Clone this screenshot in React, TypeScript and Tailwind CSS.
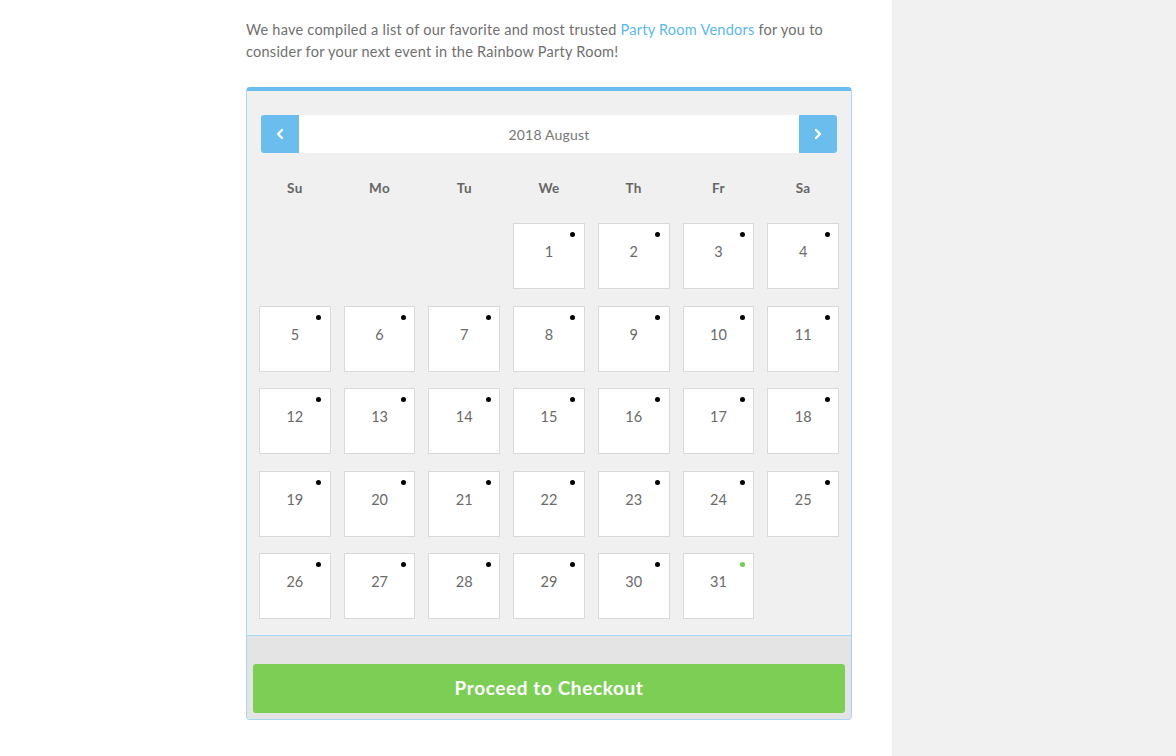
import { ChevronLeft, ChevronRight } from 'lucide-react';

const weekdays = ['Su', 'Mo', 'Tu', 'We', 'Th', 'Fr', 'Sa'];

// August 2018 starts on a Wednesday
const cells: (number | null)[] = [
  ...Array(3).fill(null),
  ...Array.from({ length: 31 }, (_, i) => i + 1),
];

export default function App() {
  return (
    <div className="flex min-h-[756px] w-[1176px] font-['Lato',sans-serif]">
      <main className="w-[892px] shrink-0 bg-white pl-[246px] pt-[19px]">
        <p className="w-[606px] text-[14.5px] leading-[22px] tracking-[0.25px] text-[#6f6f6f]">
          We have compiled a list of our favorite and most trusted{' '}
          <a href="#" className="text-[#5ab9ea]">Party Room Vendors</a> for you to consider for your next event in the
          Rainbow Party Room!
        </p>

        {/* Calendar */}
        <div className="mt-[24px] w-[606px] overflow-hidden rounded-[4px] border border-t-4 border-[#a5d6f2] border-t-[#6bbdee] bg-[#f0f0f0]">
          <div className="px-[12px] pt-[24px]">
            <div className="mx-[2px] flex h-[38px] overflow-hidden rounded-[3px] bg-white">
              <button className="flex w-[38px] items-center justify-center bg-[#6bbdee] text-white">
                <ChevronLeft className="h-4 w-4" strokeWidth={3.5} />
              </button>
              <div className="flex flex-1 items-center justify-center text-[14px] tracking-[0.2px] text-[#777]">
                2018 August
              </div>
              <button className="flex w-[38px] items-center justify-center bg-[#6bbdee] text-white">
                <ChevronRight className="h-4 w-4" strokeWidth={3.5} />
              </button>
            </div>

            <div className="mt-[26px] grid grid-cols-7 gap-x-[13px]">
              {weekdays.map((d) => (
                <div key={d} className="text-center text-[13.5px] font-bold leading-[18px] tracking-[0.3px] text-[#666]">
                  {d}
                </div>
              ))}
            </div>

            <div className="mt-[26px] grid grid-cols-7 gap-x-[13px] gap-y-[16.5px] pb-[16px]">
              {cells.map((n, i) =>
                n === null ? (
                  <div key={i} className="h-[66px]" />
                ) : (
                  <div
                    key={i}
                    className="relative flex h-[66px] items-start justify-center border border-[#d9d9d9] bg-white pt-[19px] text-[14.5px] leading-[18px] text-[#6a6a6a]"
                  >
                    {n}
                    <span
                      className={`absolute right-[8.5px] top-[8px] h-[5px] w-[5px] rounded-full ${
                        n === 31 ? 'bg-[#6fd04f]' : 'bg-black'
                      }`}
                    />
                  </div>
                )
              )}
            </div>
          </div>

          <div className="border-t border-[#a5d6f2] bg-[#e4e4e4] px-[6px] pb-[6px] pt-[28px]">
            <button className="flex h-[49px] w-full items-center justify-center rounded-[3px] bg-[#7cce55] text-[19px] font-bold tracking-[0.6px] text-white">
              Proceed to Checkout
            </button>
          </div>
        </div>
      </main>
      <aside className="flex-1 bg-[#f1f1f1]" />
    </div>
  );
}
